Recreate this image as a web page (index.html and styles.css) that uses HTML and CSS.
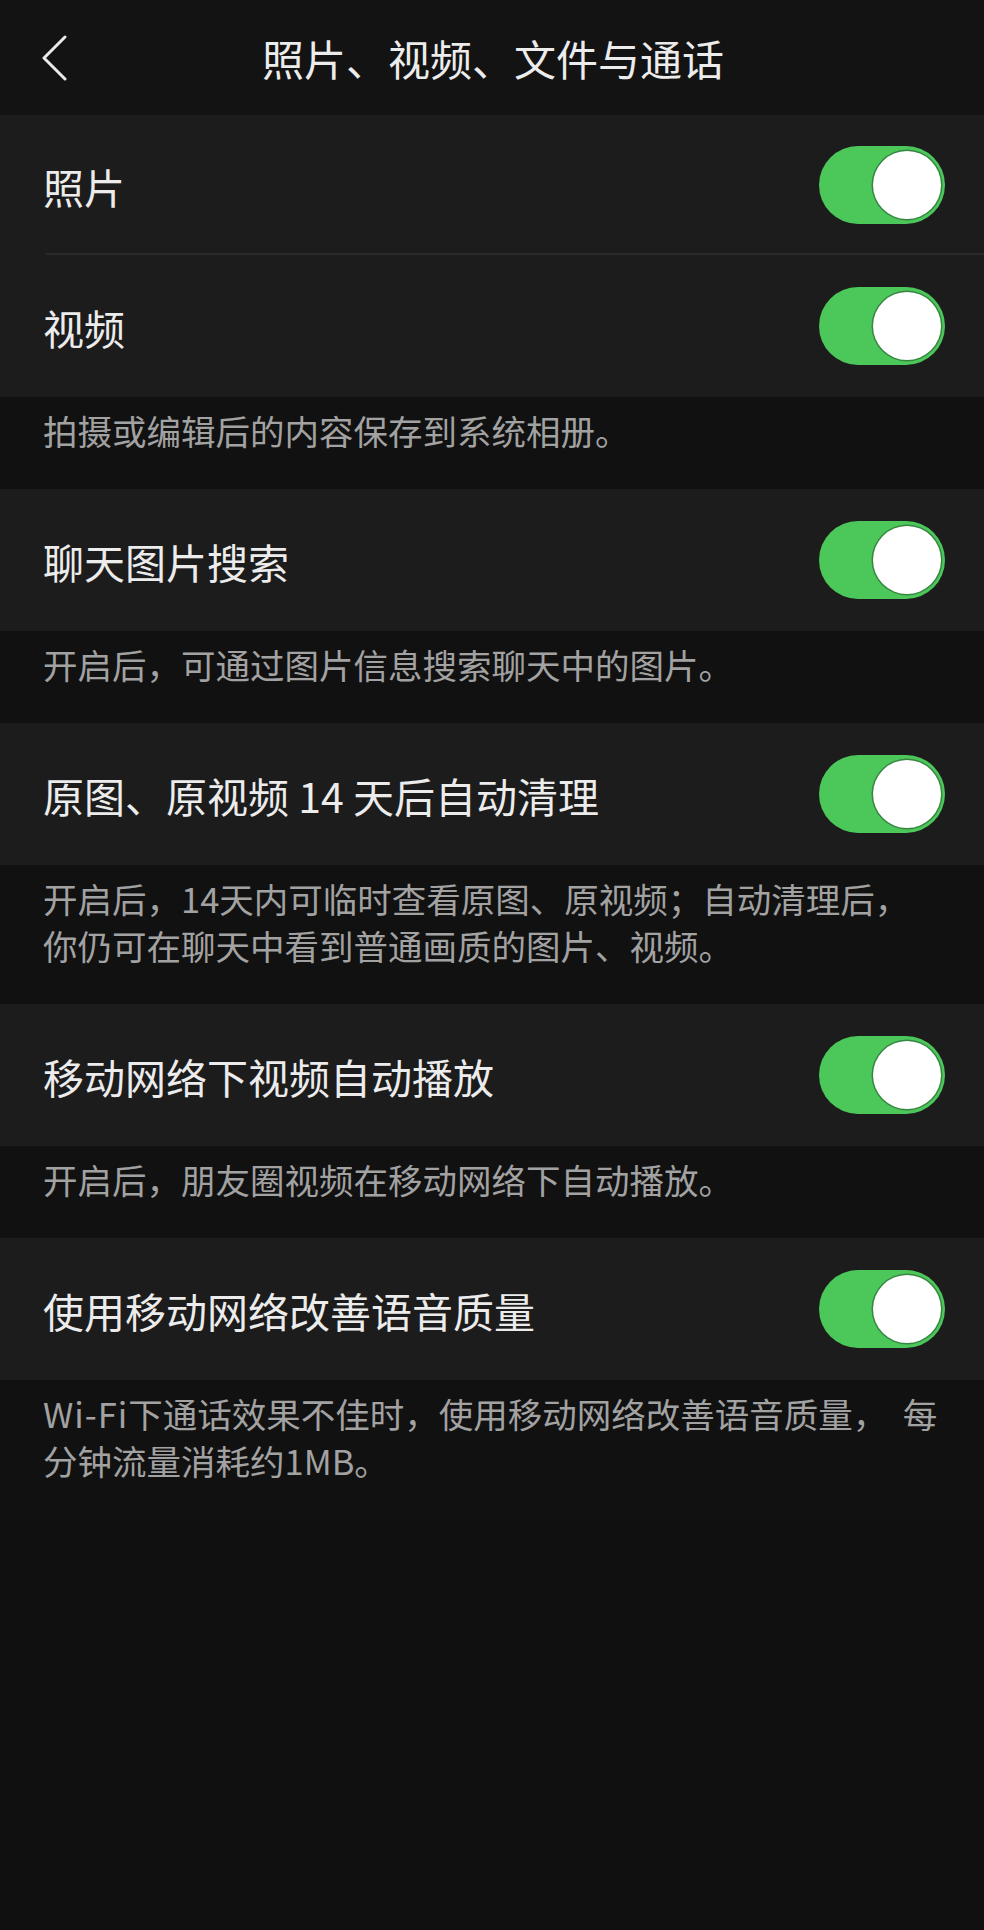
FILE: index.html
```html
<!DOCTYPE html>
<html>
<head>
    <meta charset="utf-8">
    <title>照片、视频、文件与通话</title>
    <link rel="stylesheet" href="styles.css">
</head>
<body>
    <header class="nav">
        <svg class="back" width="26" height="46" viewBox="0 0 26 46" fill="none" stroke="currentColor" stroke-width="3" stroke-linecap="round" stroke-linejoin="round">
            <polyline points="23 2 2 23 23 44"></polyline>
        </svg>
        <h1>照片、视频、文件与通话</h1>
    </header>

    <section class="group">
        <div class="cell divided">
            <span class="label">照片</span>
            <span class="switch on"></span>
        </div>
        <div class="cell">
            <span class="label">视频</span>
            <span class="switch on"></span>
        </div>
        <p class="note">拍摄或编辑后的内容保存到系统相册。</p>
    </section>

    <section class="group">
        <div class="cell">
            <span class="label">聊天图片搜索</span>
            <span class="switch on"></span>
        </div>
        <p class="note">开启后，可通过图片信息搜索聊天中的图片。</p>
    </section>

    <section class="group">
        <div class="cell">
            <span class="label">原图、原视频 14 天后自动清理</span>
            <span class="switch on"></span>
        </div>
        <p class="note">开启后，14天内可临时查看原图、原视频；自动清理后，<br>你仍可在聊天中看到普通画质的图片、视频。</p>
    </section>

    <section class="group">
        <div class="cell">
            <span class="label">移动网络下视频自动播放</span>
            <span class="switch on"></span>
        </div>
        <p class="note">开启后，朋友圈视频在移动网络下自动播放。</p>
    </section>

    <section class="group">
        <div class="cell">
            <span class="label">使用移动网络改善语音质量</span>
            <span class="switch on"></span>
        </div>
        <p class="note"><span class="latin">Wi-Fi</span>下通话效果不佳时，使用移动网络改善语音质量，&nbsp; 每<br>分钟流量消耗约1MB。</p>
    </section>
</body>
</html>
```

FILE: styles.css
```css
:root {
    --background: #101010;
    --nav: #131313;
    --cell: #1c1c1c;
    --note: #111111;
    --line: #2a2a2a;
    --text: #ececec;
    --muted: #a2a2a2;
    --green: #4cc75a;
}

* {
    margin: 0;
    padding: 0;
    box-sizing: border-box;
}

html, body {
    background: var(--background);
}

body {
    font-family: "Noto Sans CJK SC", "Noto Sans", sans-serif;
    color: var(--text);
    min-height: 1930px;
}

.nav {
    height: 115px;
    background: var(--nav);
    display: flex;
    align-items: center;
    justify-content: center;
    position: relative;
}

.nav .back {
    position: absolute;
    left: 42px;
    top: 35px;
    color: #eaeaea;
}

.nav h1 {
    font-size: 42px;
    font-weight: 400;
    color: var(--text);
    margin-left: 2px;
}

.cell {
    height: 142px;
    background: var(--cell);
    display: flex;
    align-items: center;
    justify-content: space-between;
    padding: 0 39px 0 43px;
    position: relative;
}

.group:first-of-type .cell:first-child {
    height: 140px;
}

.cell.divided::after {
    content: "";
    position: absolute;
    left: 46px;
    right: 0;
    bottom: 0;
    height: 2px;
    background: var(--line);
}

.label {
    font-size: 41px;
    font-weight: 400;
    color: var(--text);
    padding-top: 2px;
}

.switch {
    width: 126px;
    height: 78px;
    border-radius: 39px;
    background: #3a3a3a;
    position: relative;
    flex-shrink: 0;
}

.switch.on {
    background: var(--green);
}

.switch::after {
    content: "";
    position: absolute;
    top: 5px;
    left: 5px;
    width: 68px;
    height: 68px;
    border-radius: 50%;
    background: #fff;
    box-shadow: 0 0 0 1.5px rgba(40, 90, 50, 0.6);
}

.switch.on::after {
    left: auto;
    right: 4px;
}

.note {
    background: var(--note);
    color: var(--muted);
    font-size: 34.5px;
    line-height: 47px;
    padding: 10px 30px 35px 43px;
}

.note .latin {
    letter-spacing: 1px;
}
```
